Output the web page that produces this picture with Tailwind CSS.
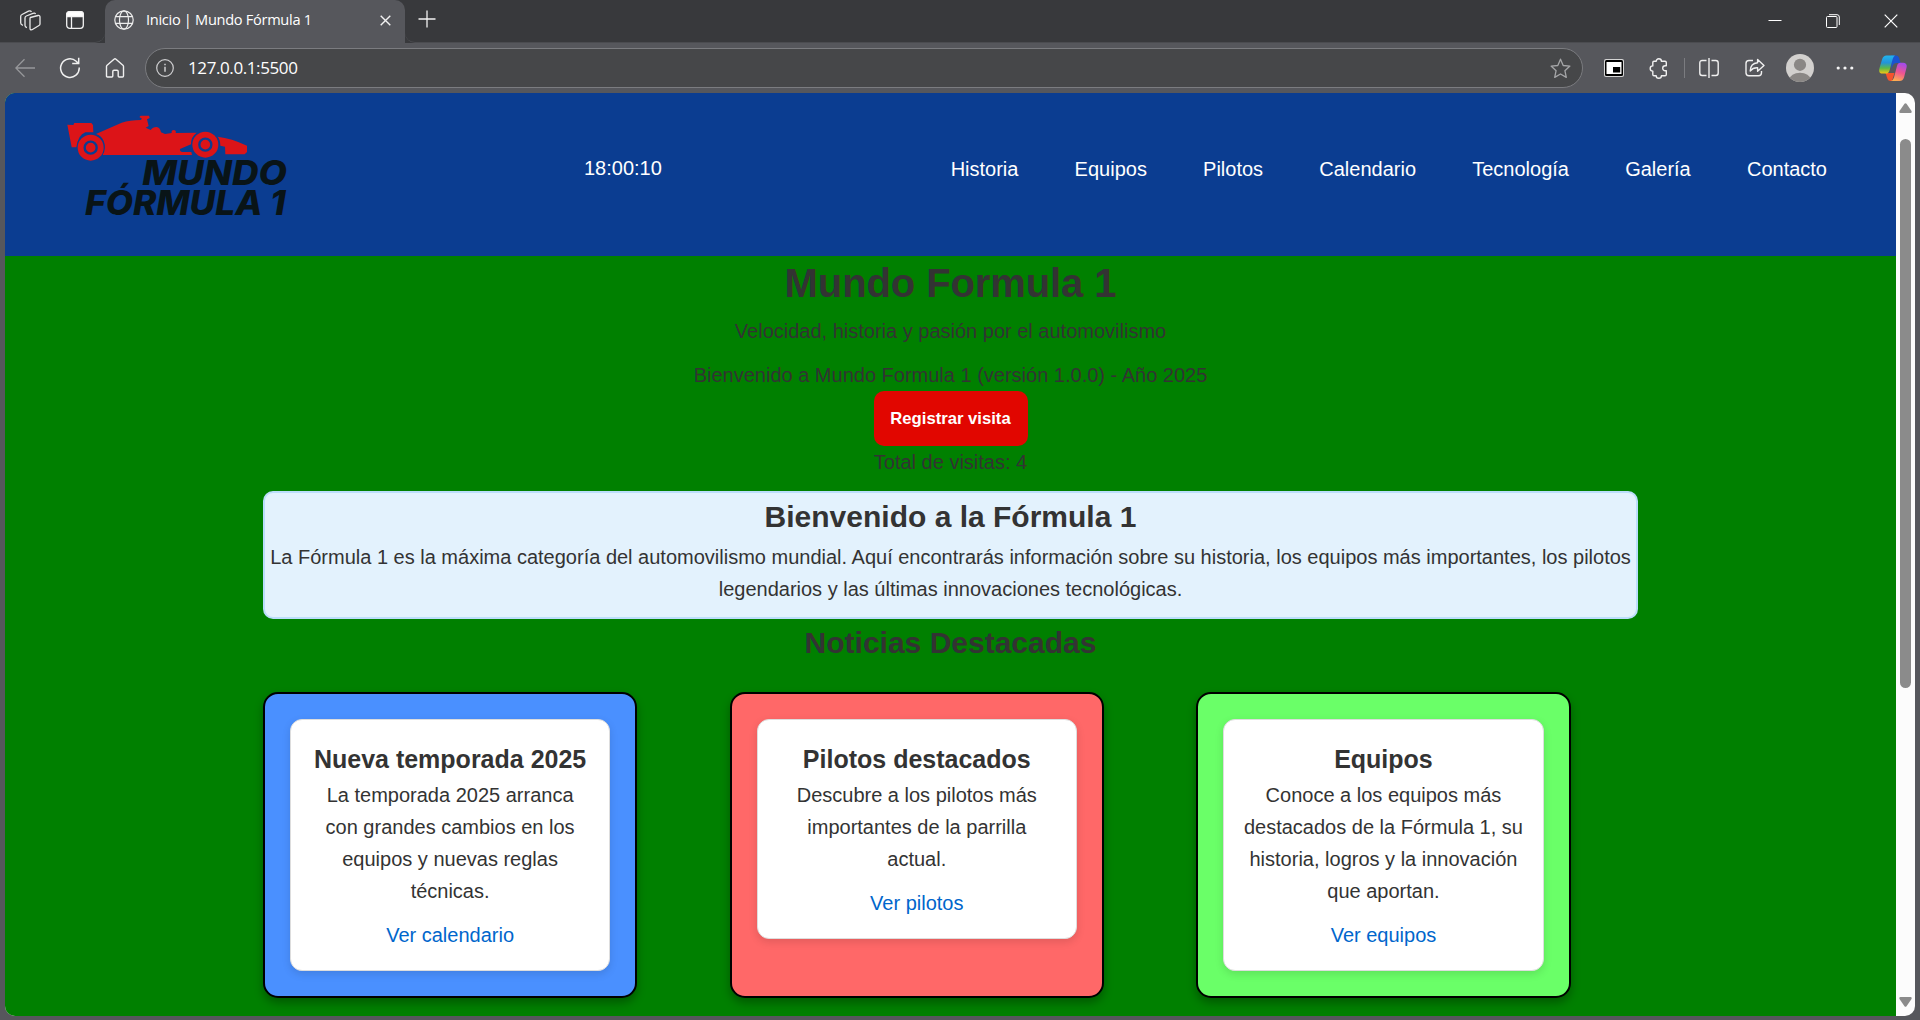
<!DOCTYPE html>
<html lang="es">
<head>
<meta charset="utf-8">
<title>Inicio | Mundo Fórmula 1</title>
<script src="https://cdn.jsdelivr.net/npm/@tailwindcss/browser@4"></script>
</head>
<body class="w-[1920px] h-[1020px] overflow-hidden bg-[#56575c] flex flex-col font-['Liberation_Sans',Arial,sans-serif]">

<!-- Tab strip -->
<div class="h-[43px] shrink-0 bg-[#38393c] flex text-white">
  <div class="w-[105px] border-b border-[#4b4c50] rounded-br-[10px] flex items-center pl-[20px] pb-[2px] gap-[25px] bg-[#38393c]">
    <svg class="w-[21px] h-[21px]" viewBox="0 0 21 21" fill="none" stroke="#e8e8e8" stroke-width="1.3" stroke-linejoin="round">
      <path d="M10.3 7.5 18 5.5q2-.4 2 1.5v7q0 1.200-1 1.500L12 19.700q-2 .6-2-1.500V8.500z"/>
      <path d="M7 17.500q-2-.3-2-2V8q0-1.500 1.300-2L13 3.300q2-.7 2.500.8"/>
      <path d="M3 15.300q-2.300-.6-2.300-2.300V6.500q0-1.500 1.300-2L8.500 1.200q2-.8 3 .6"/>
    </svg>
    <svg class="w-[18px] h-[18px]" viewBox="0 0 18 18" fill="none" stroke="#f2f2f2" stroke-width="1.300">
      <rect x=".7" y=".7" width="16.600" height="16.600" rx="3"/>
      <path d="M.7 5.500V3.500Q.7.700 3.500.700h11q2.800 0 2.800 2.800v2z" fill="#fff"/><path d="M5.500 5v12.500"/>
    </svg>
  </div>
  <div class="w-[300px] bg-[#56575c] rounded-t-[10px] flex items-center pl-[9px] pb-[3px]">
    <svg class="w-[20px] h-[20px]" viewBox="0 0 20 20" fill="none" stroke="#ececec" stroke-width="1.200">
      <circle cx="10" cy="10" r="9.200"/><ellipse cx="10" cy="10" rx="4.500" ry="9.200"/><path d="M1.600 6.700h16.800M1.600 13.300h16.800"/>
    </svg>
    <span class="ml-[12px] mt-[-2px] w-[210px] text-[14.600px] leading-5 whitespace-nowrap font-['Open_Sans','Noto_Sans',sans-serif] tracking-[-0.300px]">Inicio | Mundo Fórmula 1</span>
    <svg class="ml-[24px] w-[11px] h-[11px]" viewBox="0 0 11 11" stroke="#f2f2f2" stroke-width="1.400"><path d="M.7.700l9.600 9.600M10.300.700.700 10.300"/></svg>
  </div>
  <div class="flex-1 border-b border-[#4b4c50] rounded-bl-[10px] flex items-center">
    <svg class="ml-[13px] mt-[-4px] w-[18px] h-[18px]" viewBox="0 0 18 18" stroke="#f2f2f2" stroke-width="1.300"><path d="M9 .5v17M.500 9h17"/></svg>
    <div class="ml-auto mr-[22px] flex items-center">
      <svg class="w-[14px] h-[14px]" viewBox="0 0 14 14" stroke="#fff" stroke-width="1"><path d="M.500 6.500h13"/></svg>
      <svg class="ml-[44px] w-[14px] h-[14px]" viewBox="0 0 14 14" fill="none" stroke="#fff" stroke-width="1"><rect x=".5" y="2.500" width="10.500" height="11" rx="1"/><path d="M3 .700h8q2.300 0 2.300 2.300v8"/></svg>
      <svg class="ml-[44px] w-[14px] h-[14px]" viewBox="0 0 14 14" stroke="#fff" stroke-width="1.200"><path d="M.700.700l12.600 12.600M13.300.700.700 13.300"/></svg>
    </div>
  </div>
</div>

<!-- Toolbar -->
<div class="h-[50px] shrink-0 flex items-center pl-[15px]">
  <svg class="w-[20px] h-[20px]" viewBox="0 0 20 20" fill="none" stroke="#97989b" stroke-width="1.300"><path d="M20 10H.800M9.500 1.300.800 10l8.700 8.700"/></svg>
  <svg class="ml-[24px] w-[22px] h-[22px]" viewBox="0 0 22 22" fill="none" stroke="#f0f0f0" stroke-width="1.500"><path d="M20.200 10.500a9.300 9.300 0 1 1-3-6.300l2 2M19.700.800v5.700h-6.500"/></svg>
  <svg class="ml-[24px] w-[20px] h-[20px]" viewBox="0 0 20 20" fill="none" stroke="#f0f0f0" stroke-width="1.400" stroke-linejoin="round"><path d="M1.500 8.500q0-.8.600-1.300L9 1.200q1-.8 2 0l6.900 6q.6.500.6 1.300V18q0 1-1 1h-3.300q-1 0-1-1v-4.500q0-1.200-1.200-1.200H9q-1.200 0-1.200 1.200V18q0 1-1 1H2.500q-1 0-1-1z"/></svg>
  <div class="ml-[20px] w-[1438px] h-[40px] rounded-full bg-[#464749] border border-[#7b7c80] flex items-center pl-[10px] pr-[11px]">
    <svg class="w-[18px] h-[18px]" viewBox="0 0 18 18" fill="none" stroke="#cfcfd1" stroke-width="1.200"><circle cx="9" cy="9" r="8.300"/><path d="M9 7.800v5M9 4.700v1.500" stroke-width="1.500"/></svg>
    <span class="ml-[14px] mt-[-1px] text-[17px] leading-6 text-white font-['Open_Sans','Noto_Sans',sans-serif] tracking-[-0.400px]">127.0.0.1:5500</span>
    <svg class="ml-auto w-[21px] h-[21px]" viewBox="0 0 21 21" fill="none" stroke="#a5a6a8" stroke-width="1.300" stroke-linejoin="round"><path d="M10.500 1.200 13.200 7.500l6.700.6-5 4.600 1.400 6.700-5.800-3.400-5.800 3.400 1.400-6.700-5-4.600 6.700-.6z"/></svg>
  </div>
  <svg class="ml-[21px] w-[20px] h-[18px]" viewBox="0 0 20 18"><rect width="20" height="18" rx="2" fill="#d5d5d5"/><rect x="1" y="1" width="18" height="16" rx="1.500" fill="#000"/><rect x="2.500" y="3" width="15" height="12" fill="#fff"/><rect x="9" y="8" width="7.200" height="5.500" fill="#000"/></svg>
  <svg class="ml-[25px] w-[19px] h-[21px]" viewBox="0 0 19 21" fill="none" stroke="#f0f0f0" stroke-width="1.400" stroke-linejoin="round"><path d="M7.200 3.300a2.600 2.600 0 0 1 5.200 0H16q1.300 0 1.300 1.300v3.200h-1.100a2.500 2.500 0 0 0 0 5h1.100v3.600q0 1.300-1.300 1.300h-3.600a2.600 2.600 0 0 1-5.200 0H5q-1.200 0-1.200-1.300v-3.300a2.600 2.600 0 0 1 0-5.200V4.600q0-1.300 1.200-1.300z"/></svg>
  <div class="ml-[16px] w-px h-[20px] bg-[#7b7c80]"></div>
  <svg class="ml-[14px] w-[20px] h-[20px]" viewBox="0 0 20 20" fill="none" stroke="#f0f0f0" stroke-width="1.400"><path d="M10 0v20M7.500 2.500H3.200Q.8 2.500.8 5v10q0 2.500 2.400 2.500h4.300M12.500 2.500h4.300q2.400 0 2.400 2.500v10q0 2.500-2.400 2.500h-4.300"/></svg>
  <svg class="ml-[26px] w-[20px] h-[20px]" viewBox="0 0 20 20" fill="none" stroke="#f0f0f0" stroke-width="1.400" stroke-linejoin="round"><path d="M8 2.500H4Q1 2.500 1 5.500v9.300q0 3 3 3h9.500q3 0 3-3V13"/><path d="M12.600 1.500 19 7.500l-6.400 5.700V9.800Q8 9.500 5.200 13 5.500 5.300 12.600 4.800z"/></svg>
  <svg class="ml-[21px] w-[28px] h-[28px]" viewBox="0 0 28 28"><defs><clipPath id="av"><circle cx="14" cy="14" r="14"/></clipPath></defs><g clip-path="url(#av)"><rect width="28" height="28" fill="#d2d0ce"/><circle cx="14" cy="10.800" r="6.100" fill="#8a8785"/><ellipse cx="14" cy="25.500" rx="10.500" ry="6.800" fill="#8a8785"/></g></svg>
  <svg class="ml-[22px] w-[18px] h-[4px]" viewBox="0 0 18 4" fill="#f5f5f5"><circle cx="2.200" cy="2" r="1.600"/><circle cx="9" cy="2" r="1.600"/><circle cx="15.800" cy="2" r="1.600"/></svg>
  <svg class="ml-[25px] w-[28px] h-[27px]" viewBox="0 0 28 27">
    <defs>
      <linearGradient id="c1" x1="0" y1="0" x2="0" y2="1"><stop offset="0" stop-color="#21b5ee"/><stop offset=".4" stop-color="#2393d9"/><stop offset=".7" stop-color="#5cb947"/><stop offset="1" stop-color="#f5c713"/></linearGradient>
      <linearGradient id="c2" x1=".6" y1="0" x2=".3" y2="1"><stop offset="0" stop-color="#a44be9"/><stop offset=".5" stop-color="#ee5590"/><stop offset="1" stop-color="#fdb04e"/></linearGradient>
    </defs>
    <path d="M12 .500h5q2.200 0 2.900 2l1.700 5.500H17q-2.500 0-3.300 2.500L12.500 14z" fill="#1a53d0"/>
    <path d="M6.500 18h9l-2.500 8h-1.500q-2.200 0-3-2z" fill="#f5532d"/>
    <path d="M7.500.500h8.500Q14.500 1 13.700 4L10.500 15.500Q9.700 18.600 7 18.600H4q-4.800 0-3.600-5L3.200 4Q4.300.500 7.500.500z" fill="url(#c1)"/>
    <path d="M20.500 26h-8.500q2.200-.4 3-3.400l3-11.600q.8-3.300 3.500-3.300h2.700q4.400.2 3.300 5L25 22.500Q23.800 26 20.500 26z" fill="url(#c2)"/>
  </svg>
</div>

<!-- Page viewport -->
<div class="ml-[5px] w-[1910px] h-[923px] rounded-[10px] overflow-hidden flex bg-[#fcfcfc]">
  <div class="w-[1891px] h-[923px] overflow-hidden bg-[#008000] text-[#333] text-[20px] leading-[32px]">
    <header class="relative z-10 h-[163px] bg-[#0b3d91] text-white flex items-center">
      <svg class="ml-[45px] w-[260px] h-[140px] mb-[20px]" viewBox="0 0 780 420">
        <g fill="#dc1418">
          <path d="M52 89 70 90 73 84H124L129 90 130 112H106Q84 120 79 157H65z"/>
          <path d="M138 117 215 83Q240 75 272 75L276 71 268 66 272 62H297L299 69 291 73 296 93 287 98 302 105Q308 96 320 96 330 97 333 112L345 117 365 114Q363 106 371 105 380 106 377 114L440 113Q422 126 423 148L390 162Q388 170 398 171H424L426 180H158Q170 160 161 138 154 122 138 117z"/>
          <path d="M503 125Q545 130 591 152V171L584 178H526L525 155 511 152Q511 135 503 125z"/>
          <circle cx="122" cy="158" r="39"/><circle cx="466" cy="149" r="39"/>
        </g>
        <g fill="none" stroke="#0b3d91" stroke-width="7"><circle cx="122" cy="158" r="18"/><circle cx="466" cy="149" r="18"/></g>
        <g fill="#091417" font-family="Inter, 'Open Sans', sans-serif" font-weight="800" font-style="italic" font-size="101">
          <text x="277" y="269" textLength="434" lengthAdjust="spacingAndGlyphs">MUNDO</text>
          <text x="105" y="359" textLength="602" lengthAdjust="spacingAndGlyphs">FÓRMULA 1</text>
        </g>
      </svg>
      <div class="ml-[274px] mt-[-14px]">18:00:10</div>
      <nav class="ml-auto mr-[69px] mt-[-12px] flex gap-[56.200px]">
        <a>Historia</a><a>Equipos</a><a>Pilotos</a><a>Calendario</a><a>Tecnología</a><a>Galería</a><a>Contacto</a>
      </nav>
    </header>

    <main class="mt-[-5px] w-[1375px] mx-auto text-center">
      <h1 class="text-[40px] leading-[64px] font-bold tracking-[-0.100px]">Mundo Formula 1</h1>
      <p class="mb-3">Velocidad, historia y pasión por el automovilismo</p>
      <p>Bienvenido a Mundo Formula 1 (versión 1.0.0) - Año 2025</p>
      <button class="block mx-auto w-[154px] h-[55px] rounded-[10px] bg-[#e10600] text-white font-bold text-[16.670px]">Registrar visita</button>
      <p class="mb-[13px]">Total de visitas: 4</p>

      <section class="h-[128px] bg-[#e3f2fd] border-2 border-[#bbdefb] rounded-[10px]">
        <h2 class="text-[30px] leading-[48px] font-bold">Bienvenido a la Fórmula 1</h2>
        <p class="whitespace-nowrap">La Fórmula 1 es la máxima categoría del automovilismo mundial. Aquí encontrarás información sobre su historia, los equipos más importantes, los pilotos<br>legendarios y las últimas innovaciones tecnológicas.</p>
      </section>

      <h2 class="text-[30px] leading-[48px] font-bold">Noticias Destacadas</h2>

      <div class="mt-[25px] flex gap-[92.500px]">
        <article class="w-[374.200px] h-[306px] shrink-0 bg-[#4a90ff] border-2 border-black rounded-[15px] p-[25px] shadow-[0_5px_10px_rgba(0,0,0,0.300)]">
          <div class="bg-white border border-[#ddd] rounded-[12px] pt-[19px] pb-[19px] shadow-[0_3px_8px_rgba(0,0,0,0.120)]">
            <h3 class="text-[25px] leading-[40px] font-bold">Nueva temporada 2025</h3>
            <p class="mb-3">La temporada 2025 arranca<br>con grandes cambios en los<br>equipos y nuevas reglas<br>técnicas.</p>
            <a class="block text-[#0066cc]">Ver calendario</a>
          </div>
        </article>
        <article class="w-[374.200px] h-[306px] shrink-0 bg-[#ff6868] border-2 border-black rounded-[15px] p-[25px] shadow-[0_5px_10px_rgba(0,0,0,0.300)]">
          <div class="bg-white border border-[#ddd] rounded-[12px] pt-[19px] pb-[19px] shadow-[0_3px_8px_rgba(0,0,0,0.120)]">
            <h3 class="text-[25px] leading-[40px] font-bold">Pilotos destacados</h3>
            <p class="mb-3">Descubre a los pilotos más<br>importantes de la parrilla<br>actual.</p>
            <a class="block text-[#0066cc]">Ver pilotos</a>
          </div>
        </article>
        <article class="w-[374.200px] h-[306px] shrink-0 bg-[#6aff68] border-2 border-black rounded-[15px] p-[25px] shadow-[0_5px_10px_rgba(0,0,0,0.300)]">
          <div class="bg-white border border-[#ddd] rounded-[12px] pt-[19px] pb-[19px] shadow-[0_3px_8px_rgba(0,0,0,0.120)]">
            <h3 class="text-[25px] leading-[40px] font-bold">Equipos</h3>
            <p class="mb-3">Conoce a los equipos más<br>destacados de la Fórmula 1, su<br>historia, logros y la innovación<br>que aportan.</p>
            <a class="block text-[#0066cc]">Ver equipos</a>
          </div>
        </article>
      </div>
    </main>
  </div>

  <!-- Scrollbar -->
  <div class="w-[19px] flex flex-col items-center pt-[10px] pb-[9px]">
    <svg class="w-[13px] h-[10px]" viewBox="0 0 13 10" fill="#8b8b8b"><path d="M5.500.800q1-1.200 2 0l5 7.200q.7 1.800-1 2h-10q-1.700-.2-1-2z"/></svg>
    <div class="mt-[26px] w-[11px] h-[549px] rounded-full bg-[#8b8b8b]"></div>
    <svg class="mt-auto w-[13px] h-[10px]" viewBox="0 0 13 10" fill="#8b8b8b"><path d="M5.500 9.200q1 1.200 2 0l5-7.200q.7-1.800-1-2h-10q-1.700.2-1 2z"/></svg>
  </div>
</div>
</body>
</html>
